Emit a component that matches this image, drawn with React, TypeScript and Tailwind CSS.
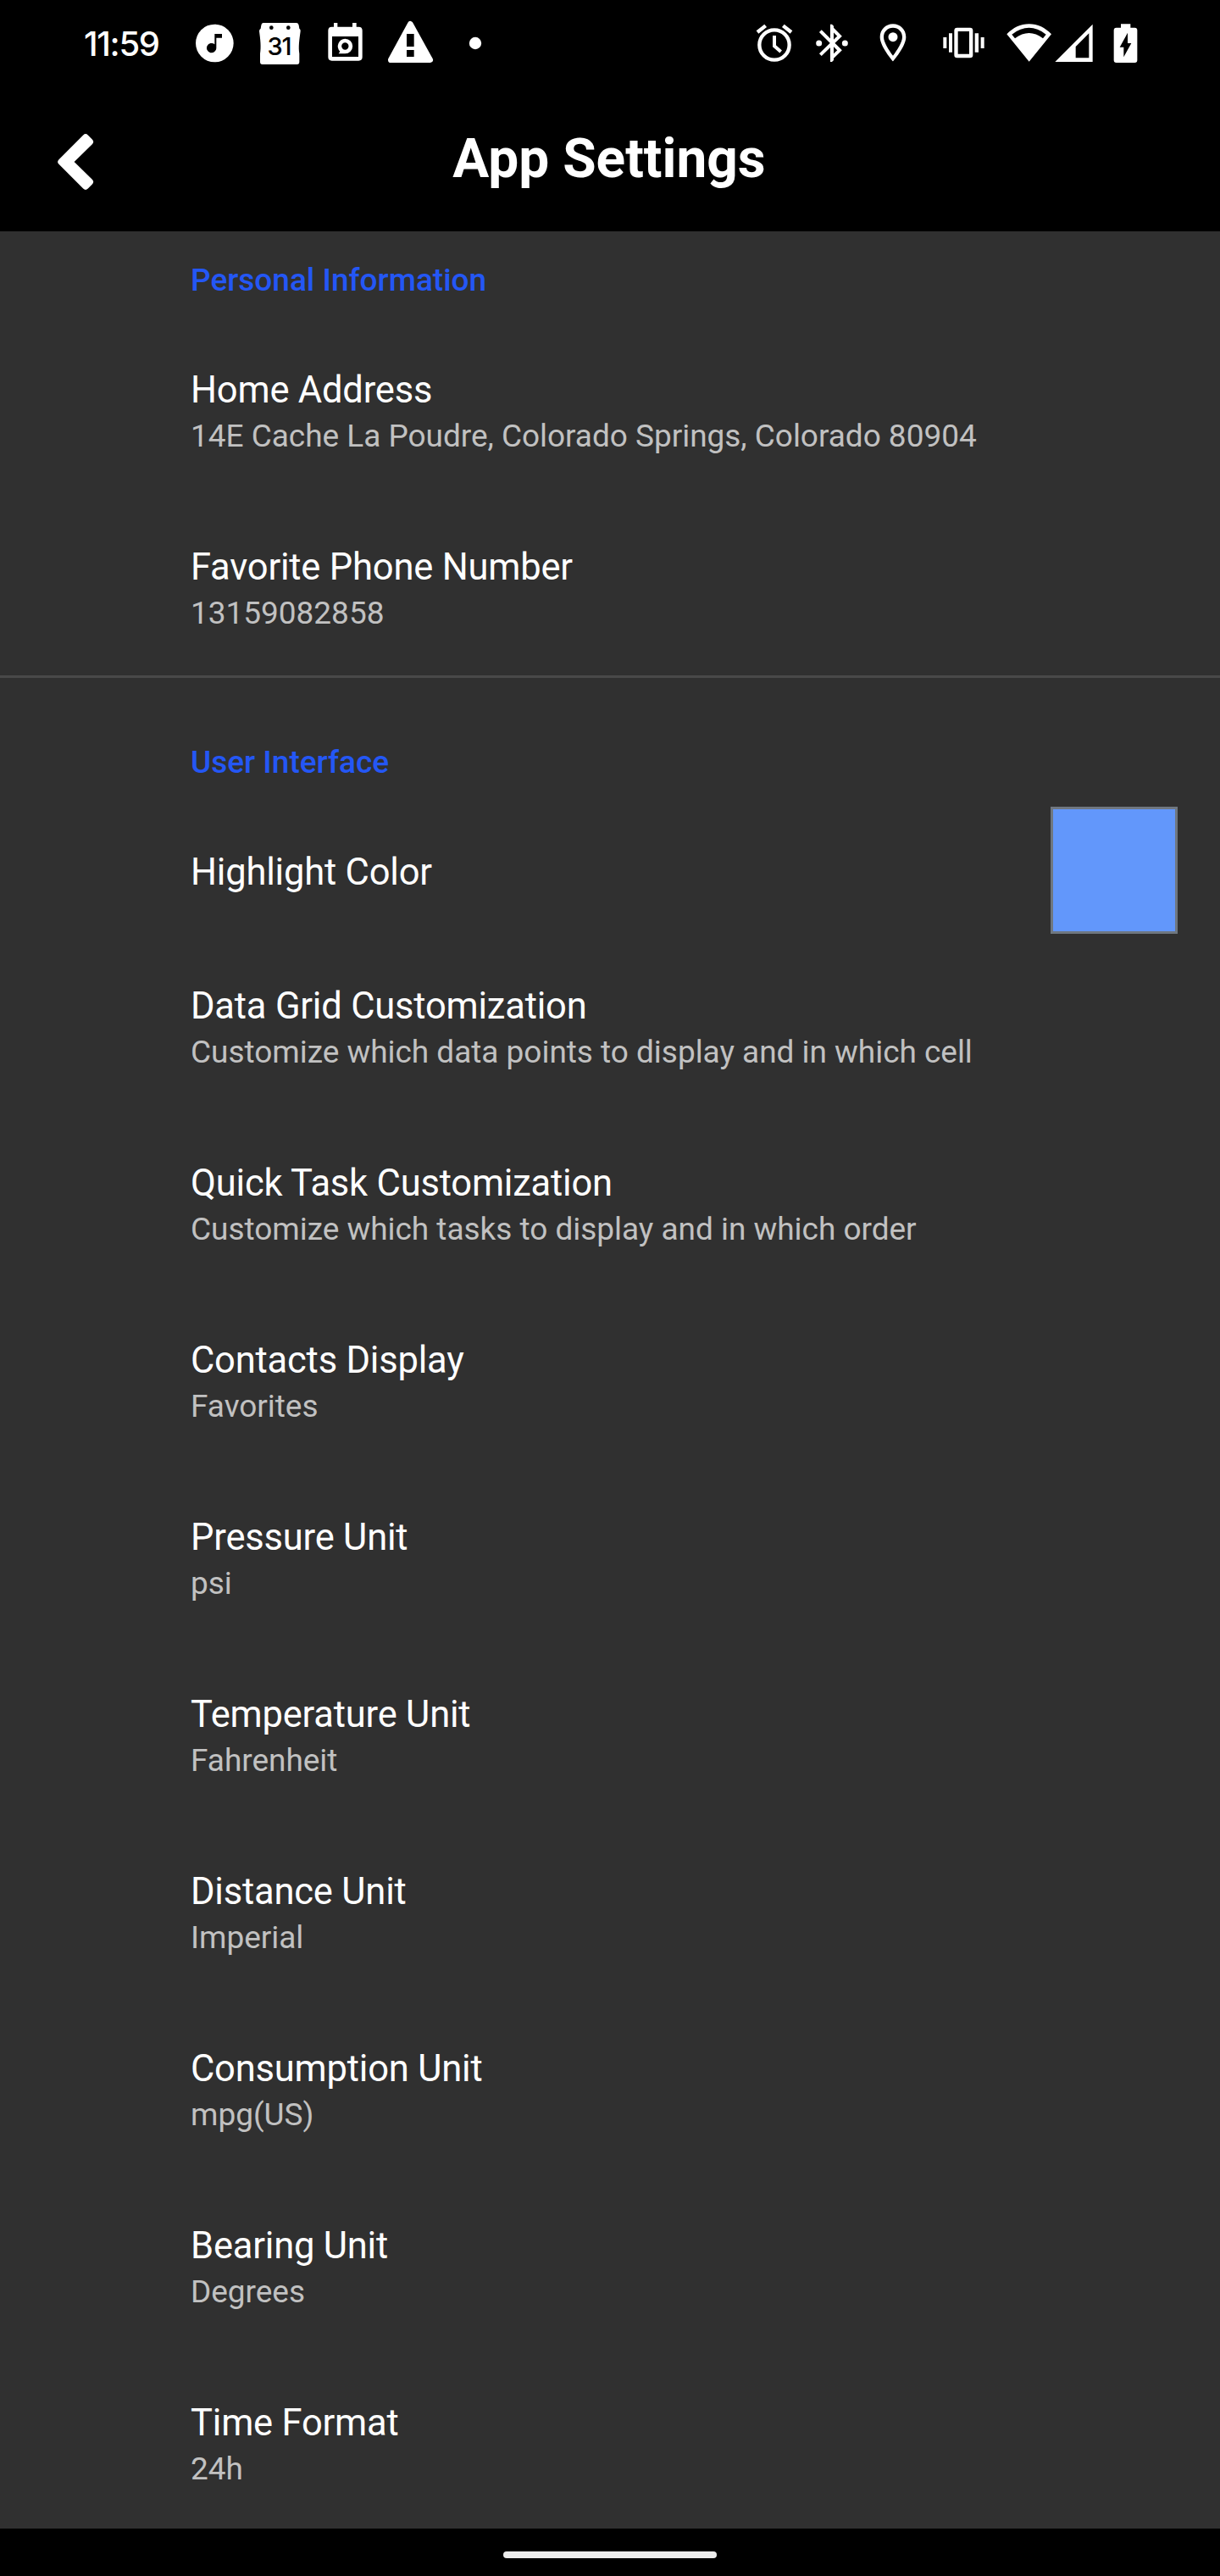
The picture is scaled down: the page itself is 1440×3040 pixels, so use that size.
import type { ReactNode } from 'react';

type Item = { title: string; summary: string };

const personal: Item[] = [
  { title: 'Home Address', summary: '14E Cache La Poudre, Colorado Springs, Colorado 80904' },
  { title: 'Favorite Phone Number', summary: '13159082858' },
];

const preferences: Item[] = [
  { title: 'Data Grid Customization', summary: 'Customize which data points to display and in which cell' },
  { title: 'Quick Task Customization', summary: 'Customize which tasks to display and in which order' },
  { title: 'Contacts Display', summary: 'Favorites' },
  { title: 'Pressure Unit', summary: 'psi' },
  { title: 'Temperature Unit', summary: 'Fahrenheit' },
  { title: 'Distance Unit', summary: 'Imperial' },
  { title: 'Consumption Unit', summary: 'mpg(US)' },
  { title: 'Bearing Unit', summary: 'Degrees' },
  { title: 'Time Format', summary: '24h' },
];

/* Status icons share the bar's height; the drawing grid is three units per pixel. */
function StatusIcon({ x, w, className = '', children }: { x: number; w: number; className?: string; children: ReactNode }) {
  return (
    <svg
      className={`shrink-0 ${className}`}
      width={w / 3}
      height={102}
      viewBox={`${x} 0 ${w} 306`}
      fill="white"
      aria-hidden="true"
    >
      {children}
    </svg>
  );
}

function StatusBar() {
  return (
    <div className="flex h-[102px] items-start justify-between pl-[99px] pr-[97px]">
      <div className="flex">
        <span className="w-[128px] pt-[28px] font-['Inter',sans-serif] text-[40px] leading-[48px] font-medium tracking-[-1.3px] text-white">
          11:59
        </span>
        <StatusIcon x={501} w={159}>
          <circle cx="580" cy="153" r="67" />
          <path d="M580 120H606V134H586V170A17 17 0 1 1 580 157Z" fill="black" />
        </StatusIcon>
        <StatusIcon x={729} w={162} className="ml-[23px]">
          <path d="M752 81H870Q877 81 878 89L880 101Q885 104 884 110C880 140 876 165 880 190V219Q880 228 872 228H749Q741 228 741 219V190C745 165 742 140 738 110Q738 104 743 101L745 89Q746 81 752 81Z" />
          <circle cx="781" cy="98" r="7" fill="black" />
          <circle cx="841" cy="98" r="7" fill="black" />
          <text x="808" y="196" textAnchor="middle" fill="black" fontFamily="Inter, sans-serif" fontWeight="500" fontSize="87" letterSpacing="-4">
            31
          </text>
        </StatusIcon>
        <StatusIcon x={972} w={141} className="ml-[27px]">
          <path
            fillRule="evenodd"
            d="M1002 81H1015V95H1068V81H1082V95H1090Q1103 95 1103 108V202Q1103 215 1090 215H995Q982 215 982 202V108Q982 95 995 95H1002ZM996 129V201H1089V129Z"
          />
          <path fillRule="evenodd" d="M1042 137A26.500 26.500 0 1 1 1042 190H1019L1024 182A26.500 26.500 0 0 1 1042 137ZM1042 151A12.500 12.500 0 1 0 1042 176A12.500 12.500 0 1 0 1042 151Z" />
        </StatusIcon>
        <StatusIcon x={1188} w={171} className="ml-[25px]">
          <path d="M1273 85L1343 212H1204Z" stroke="white" strokeWidth="20" strokeLinejoin="round" />
          <path d="M1260 120H1286V165H1260ZM1260 177H1286V201H1260Z" fill="black" />
        </StatusIcon>
        <StatusIcon x={1476} w={54} className="ml-[39px]">
          <circle cx="1503" cy="153" r="21.500" />
        </StatusIcon>
      </div>
      <div className="flex">
        <StatusIcon x={93} w={138}>
          <g fill="none" stroke="white">
            <circle cx="162" cy="159" r="53" strokeWidth="13" />
            <path d="M162 126V163L185 183" strokeWidth="12" />
            <path d="M102 114L131 91M222 114L193 91" strokeWidth="13" />
          </g>
        </StatusIcon>
        <StatusIcon x={303} w={126} className="ml-[24px]">
          <path d="M325 110L393 178L366 204V101L393 128L325 194" fill="none" stroke="white" strokeWidth="12" />
          <path d="M360 86H366L372 92V110H360ZM360 196H372V213L366 219H360Z" />
          <circle cx="320" cy="153" r="10.500" />
          <circle cx="412" cy="153" r="10.500" />
        </StatusIcon>
        <StatusIcon x={531} w={102} className="ml-[34px]">
          <path
            fillRule="evenodd"
            d="M582 85C556 85 536 105 536 131C536 165 582 217 582 217S628 165 628 131C628 105 608 85 582 85ZM582 98C601 98 615 112 615 131C615 149 597 177 582 197C567 177 549 149 549 131C549 112 563 98 582 98Z"
          />
          <circle cx="582" cy="131" r="16.500" />
        </StatusIcon>
        <StatusIcon x={753} w={159} className="ml-[40px]">
          <path
            fillRule="evenodd"
            d="M809 98H855Q865 98 865 108V195Q865 205 855 205H809Q799 205 799 195V108Q799 98 809 98ZM812 111V191H852V111Z"
          />
          <path d="M760 132H772V171H760ZM780 118H792V185H780ZM872 118H885V185H872ZM893 132H905V171H893Z" />
        </StatusIcon>
        <StatusIcon x={981} w={165} className="ml-[23px]">
          <path
            fillRule="evenodd"
            d="M985 121C1007 98 1034 85 1064 85S1121 98 1143 121L1064 218ZM1003 122L1014 136Q1064 98 1113 136L1124 122Q1064 75 1003 122Z"
          />
        </StatusIcon>
        <StatusIcon x={1155} w={135} className="ml-[3px]">
          <path fillRule="evenodd" d="M1156 219L1289 86V219ZM1229 205H1276V118L1229 165Z" />
        </StatusIcon>
        <StatusIcon x={1362} w={87} className="ml-[24px]">
          <path d="M1389 85H1423V98H1438Q1447 98 1447 107V213Q1447 222 1438 222H1373Q1364 222 1364 213V107Q1364 98 1373 98H1389Z" />
          <path d="M1413 116V153H1426L1399 202V167H1385Z" fill="black" />
        </StatusIcon>
      </div>
    </div>
  );
}

function Header() {
  return (
    <header className="grid h-[171px] grid-cols-[200px_1fr_200px] items-start">
      <button type="button" aria-label="Back" className="mt-[50px] ml-[60px] h-[80px] w-[60px]">
        <svg width="60" height="80" viewBox="30 36 180 240" aria-hidden="true">
          <path
            d="M67 153L153 67L168 82L96 153L168 224L153 239Z"
            fill="white"
            stroke="white"
            strokeWidth="24"
            strokeLinejoin="round"
          />
        </svg>
      </button>
      <h1 className="pt-[46px] pr-[2px] text-center text-[64px] leading-[80px] font-bold text-white">App Settings</h1>
    </header>
  );
}

function SectionTitle({ children }: { children: ReactNode }) {
  return <h2 className="text-[37px] leading-[44px] font-medium text-[#2457f5]">{children}</h2>;
}

function Title({ children }: { children: ReactNode }) {
  return <div className="text-[43.5px] leading-[52px] tracking-[-0.2px] text-white">{children}</div>;
}

function Rows({ items }: { items: Item[] }) {
  return (
    <div className="flex flex-col gap-[107px]">
      {items.map((item) => (
        <div key={item.title}>
          <Title>{item.title}</Title>
          <div className="mt-[6px] text-[37px] leading-[44px] tracking-[-0.03px] text-[#c1c1c1]">{item.summary}</div>
        </div>
      ))}
    </div>
  );
}

export default function App() {
  return (
    <div className="flex h-[3040px] w-[1440px] flex-col overflow-hidden bg-black font-['Roboto',sans-serif]">
      <StatusBar />
      <Header />
      <main className="h-[2711px] overflow-hidden bg-[#303030]">
        <section className="border-b-[3px] border-[#494949] pt-[36px] pb-[51px] pl-[225px]">
          <SectionTitle>Personal Information</SectionTitle>
          <div className="mt-[82px]">
            <Rows items={personal} />
          </div>
        </section>
        <section className="pt-[78px] pl-[225px]">
          <SectionTitle>User Interface</SectionTitle>
          <div className="mt-[30px] flex items-start justify-between pr-[50px]">
            <div className="pt-[52px]">
              <Title>Highlight Color</Title>
            </div>
            <div className="size-[150px] border-[3px] border-[#6f7780] bg-[#6297fb]" />
          </div>
          <div className="mt-[60px]">
            <Rows items={preferences} />
          </div>
        </section>
      </main>
      <footer className="flex h-[56px] justify-center pt-[27px]">
        <div className="h-[8px] w-[252px] rounded-full bg-[#ececec]" />
      </footer>
    </div>
  );
}
